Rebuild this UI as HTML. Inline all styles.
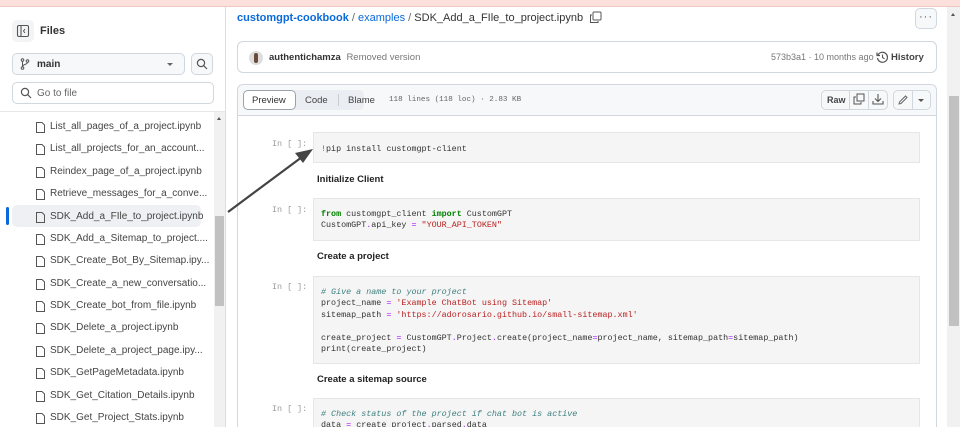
<!DOCTYPE html>
<html style="overflow:hidden;height:427px"><head><meta charset="utf-8"><style>
*{box-sizing:border-box;margin:0;padding:0}
body{width:960px;height:427px;overflow:hidden;background:#fff;font-family:"Liberation Sans",sans-serif;color:#1f2328;position:relative;font-size:10px}
.a{position:absolute}
.mono{font-family:"Liberation Mono",monospace}
.btn{border:1px solid #d0d7de;border-radius:5px;background:#f6f8fa}
.item{position:absolute;left:35px;font-size:10px;color:#444;white-space:nowrap}
.item svg{position:absolute;left:0;top:0}
.item span{position:absolute;left:15px;top:0}
.cell{position:absolute;left:313px;width:607px;background:#f5f5f5;border:1px solid #e6e6e6;font-family:"Liberation Mono",monospace;font-size:8.4px;line-height:11.4px;padding:10px 7px 8px;color:#333;white-space:pre}
.in{position:absolute;left:272px;font-family:"Liberation Mono",monospace;font-size:8.4px;color:#999}
.h{position:absolute;left:317px;font-weight:bold;font-size:9.5px;color:#222}
.k{color:#008000;font-weight:bold}.s{color:#ba2121}.c{color:#408080;font-style:italic}.o{color:#aa22ff}
</style></head><body>
<div class="a" style="left:0;top:0;width:960px;height:7px;background:#fbe0dc;border-bottom:1px solid #f0c8c2"></div>
<div class="a" style="left:225px;top:7px;width:1px;height:420px;background:#d8dee4"></div>
<div class="a" style="left:12px;top:20px;width:22px;height:22px;background:#f3f4f6;border-radius:5px"></div>
<svg class="a" style="left:16px;top:24px" width="14" height="14" viewBox="0 0 14 14"><rect x="1.5" y="1.5" width="11" height="11" rx="1.5" fill="none" stroke="#555" stroke-width="1.1"/><line x1="5" y1="1.5" x2="5" y2="12.5" stroke="#555" stroke-width="1.1"/><path d="M9 5 L7.5 7 L9 9" fill="none" stroke="#555" stroke-width="1"/></svg>
<div class="a" style="left:40px;top:25px;font-size:11px;font-weight:bold;color:#333">Files</div>
<div class="a btn" style="left:12px;top:53px;width:173px;height:22px"></div>
<svg class="a" style="left:20px;top:58px" width="10" height="12" viewBox="0 0 10 12"><circle cx="2.5" cy="2" r="1.3" fill="none" stroke="#555"/><circle cx="2.5" cy="10" r="1.3" fill="none" stroke="#555"/><circle cx="7.5" cy="3" r="1.3" fill="none" stroke="#555"/><path d="M2.5 3.3V8.7M7.5 4.3C7.5 7 2.5 6 2.5 8.7" fill="none" stroke="#555"/></svg>
<div class="a" style="left:37px;top:59px;font-size:10px;font-weight:bold;color:#333">main</div>
<div class="a" style="left:167px;top:63px;width:0;height:0;border-left:3px solid transparent;border-right:3px solid transparent;border-top:3px solid #666"></div>
<div class="a btn" style="left:191px;top:53px;width:22px;height:22px"></div>
<svg class="a" style="left:196px;top:58px" width="12" height="12"><circle cx="5" cy="5" r="3.6" fill="none" stroke="#555" stroke-width="1.2"/><line x1="7.7" y1="7.7" x2="11" y2="11" stroke="#555" stroke-width="1.2"/></svg>
<div class="a" style="left:12px;top:82px;width:202px;height:22px;border:1px solid #d0d7de;border-radius:5px"></div>
<svg class="a" style="left:20px;top:87px" width="12" height="12"><circle cx="5" cy="5" r="3.6" fill="none" stroke="#555" stroke-width="1.2"/><line x1="7.7" y1="7.7" x2="11" y2="11" stroke="#555" stroke-width="1.2"/></svg>
<div class="a" style="left:37px;top:88px;font-size:10px;color:#666">Go to file</div>
<div class="a" style="left:0;top:111px;width:225px;height:1px;background:#e5e7ea"></div>
<div class="a" style="left:214px;top:112px;width:11px;height:315px;background:#f1f1f1"></div>
<div class="a" style="left:217px;top:117px;width:0;height:0;border-left:2.5px solid transparent;border-right:2.5px solid transparent;border-bottom:3px solid #555"></div>
<div class="a" style="left:215px;top:216px;width:9px;height:90px;background:#c1c1c1"></div>
<div class="a" style="left:12px;top:205px;width:189px;height:22px;background:#eef0f3;border-radius:5px"></div>
<div class="a" style="left:6px;top:207px;width:3px;height:18px;background:#0969da;border-radius:2px"></div>
<div class="a" style="left:237px;top:12px;font-size:11px;white-space:nowrap"><span style="color:#0969da;font-weight:bold">customgpt-cookbook</span> <span style="color:#666">/</span> <span style="color:#0969da">examples</span> <span style="color:#666">/</span> <span style="color:#333">SDK_Add_a_FIle_to_project.ipynb</span></div>
<svg class="a" style="left:589px;top:11px" width="13" height="13"><rect x="4" y="1" width="8" height="8" rx="1" fill="none" stroke="#555"/><path d="M3 4H1.5V11.5H9V10" fill="none" stroke="#555"/></svg>
<div class="a btn" style="left:915px;top:8px;width:22px;height:21px"></div>
<div class="a" style="left:919px;top:11px;font-size:11px;color:#555;letter-spacing:1px">···</div>
<div class="a" style="left:237px;top:41px;width:700px;height:32px;border:1px solid #d0d7de;border-radius:6px"></div>
<div class="a" style="left:249px;top:51px;width:14px;height:14px;border-radius:50%;background:#ddd"></div>
<div class="a" style="left:254px;top:53px;width:4px;height:10px;border-radius:2px;background:#6b4a3a"></div>
<div class="a" style="left:269px;top:52px;font-size:9.5px;font-weight:bold;color:#333">authentichamza <span style="font-weight:normal;color:#777;margin-left:3px">Removed version</span></div>
<div class="a" style="left:771px;top:52px;font-size:9px;color:#777">573b3a1 · 10 months ago</div>
<svg class="a" style="left:876px;top:51px" width="12" height="12"><path d="M2 4A5 5 0 1 1 1.5 7" fill="none" stroke="#555" stroke-width="1.2"/><path d="M1 1.5V4.5H4" fill="none" stroke="#555" stroke-width="1.2"/><path d="M6.5 3.5V6.5L8.5 7.8" fill="none" stroke="#555" stroke-width="1.1"/></svg>
<div class="a" style="left:891px;top:52px;font-size:9.5px;font-weight:bold;color:#444">History</div>
<div class="a" style="left:237px;top:84px;width:700px;height:350px;border:1px solid #d0d7de;border-radius:6px"></div>
<div class="a" style="left:238px;top:85px;width:698px;height:31px;background:#f6f8fa;border-bottom:1px solid #d0d7de;border-radius:6px 6px 0 0"></div>
<div class="a" style="left:243px;top:90px;width:121px;height:20px;background:#eaedf1;border-radius:5px"></div>
<div class="a" style="left:243px;top:90px;width:53px;height:20px;background:#fff;border:1px solid #9aa3ab;border-radius:5px"></div>
<div class="a" style="left:252px;top:95px;font-size:9.5px;color:#333">Preview</div>
<div class="a" style="left:305px;top:95px;font-size:9.5px;color:#444">Code</div>
<div class="a" style="left:338px;top:94px;width:1px;height:12px;background:#ccc"></div>
<div class="a" style="left:348px;top:95px;font-size:9.5px;color:#444">Blame</div>
<div class="a mono" style="left:389px;top:96px;font-size:7.6px;color:#666">118 lines (118 loc) · 2.83 KB</div>
<div class="a btn" style="left:821px;top:90px;width:67px;height:20px;background:#f6f8fa"></div>
<div class="a" style="left:849px;top:90px;width:1px;height:20px;background:#d0d7de"></div>
<div class="a" style="left:868px;top:90px;width:1px;height:20px;background:#d0d7de"></div>
<div class="a" style="left:827px;top:95px;font-size:9px;font-weight:bold;color:#444">Raw</div>
<svg class="a" style="left:853px;top:93px" width="12" height="12"><rect x="4" y="1" width="7" height="7" fill="none" stroke="#555"/><path d="M3 4H1V11H8V9" fill="none" stroke="#555"/></svg>
<svg class="a" style="left:872px;top:93px" width="12" height="12"><path d="M6 1V8M3 5.5L6 8.5L9 5.5M1 8V11H11V8" fill="none" stroke="#555" stroke-width="1.1"/></svg>
<div class="a btn" style="left:893px;top:90px;width:38px;height:20px;background:#f6f8fa"></div>
<div class="a" style="left:912px;top:90px;width:1px;height:20px;background:#d0d7de"></div>
<svg class="a" style="left:897px;top:94px" width="12" height="12"><path d="M2 10L2.5 8L8.5 2L10 3.5L4 9.5Z" fill="none" stroke="#666"/></svg>
<div class="a" style="left:918px;top:99px;width:0;height:0;border-left:3px solid transparent;border-right:3px solid transparent;border-top:3px solid #555"></div>
<div class="in" style="top:139px">In [ ]:</div>
<div class="cell" style="top:132px;height:31px;padding-top:11px"><span class="o">!</span>pip install customgpt-client</div>
<div class="h" style="top:174px">Initialize Client</div>
<div class="in" style="top:205px">In [ ]:</div>
<div class="cell" style="top:198px;height:43px"><span class="k">from</span> customgpt_client <span class="k">import</span> CustomGPT
CustomGPT<span class="o">.</span>api_key <span class="o">=</span> <span class="s">"YOUR_API_TOKEN"</span></div>
<div class="h" style="top:251px">Create a project</div>
<div class="in" style="top:282px">In [ ]:</div>
<div class="cell" style="top:276px;height:88px"><span class="c"># Give a name to your project</span>
project_name <span class="o">=</span> <span class="s">'Example ChatBot using Sitemap'</span>
sitemap_path <span class="o">=</span> <span class="s">'https://adorosario.github.io/small-sitemap.xml'</span>

create_project <span class="o">=</span> CustomGPT<span class="o">.</span>Project<span class="o">.</span>create(project_name<span class="o">=</span>project_name, sitemap_path<span class="o">=</span>sitemap_path)
print(create_project)</div>
<div class="h" style="top:374px">Create a sitemap source</div>
<div class="in" style="top:404px">In [ ]:</div>
<div class="cell" style="top:398px;height:40px"><span class="c"># Check status of the project if chat bot is active</span>
data <span class="o">=</span> create_project<span class="o">.</span>parsed<span class="o">.</span>data</div>
<div class="a" style="left:947px;top:7px;width:13px;height:420px;background:#f1f1f1"></div>
<div class="a" style="left:951px;top:13px;width:0;height:0;border-left:2.5px solid transparent;border-right:2.5px solid transparent;border-bottom:3px solid #555"></div>
<div class="a" style="left:949px;top:96px;width:10px;height:230px;background:#c1c1c1"></div>
<svg class="a" style="left:0;top:0" width="960" height="427"><line x1="228" y1="212" x2="302" y2="157" stroke="#444" stroke-width="2.2"/><path d="M313 149L295 153L303 163Z" fill="#444"/></svg>
<div class="item" style="top:121px"><svg width="11" height="13"><path d="M1.5 1.5H7L9.5 4V11.5H1.5Z" fill="none" stroke="#555"/></svg><span>List_all_pages_of_a_project.ipynb</span></div>
<div class="item" style="top:143px"><svg width="11" height="13"><path d="M1.5 1.5H7L9.5 4V11.5H1.5Z" fill="none" stroke="#555"/></svg><span>List_all_projects_for_an_account...</span></div>
<div class="item" style="top:166px"><svg width="11" height="13"><path d="M1.5 1.5H7L9.5 4V11.5H1.5Z" fill="none" stroke="#555"/></svg><span>Reindex_page_of_a_project.ipynb</span></div>
<div class="item" style="top:188px"><svg width="11" height="13"><path d="M1.5 1.5H7L9.5 4V11.5H1.5Z" fill="none" stroke="#555"/></svg><span>Retrieve_messages_for_a_conve...</span></div>
<div class="item" style="top:211px"><svg width="11" height="13"><path d="M1.5 1.5H7L9.5 4V11.5H1.5Z" fill="none" stroke="#555"/></svg><span>SDK_Add_a_FIle_to_project.ipynb</span></div>
<div class="item" style="top:233px"><svg width="11" height="13"><path d="M1.5 1.5H7L9.5 4V11.5H1.5Z" fill="none" stroke="#555"/></svg><span>SDK_Add_a_Sitemap_to_project....</span></div>
<div class="item" style="top:255px"><svg width="11" height="13"><path d="M1.5 1.5H7L9.5 4V11.5H1.5Z" fill="none" stroke="#555"/></svg><span>SDK_Create_Bot_By_Sitemap.ipy...</span></div>
<div class="item" style="top:278px"><svg width="11" height="13"><path d="M1.5 1.5H7L9.5 4V11.5H1.5Z" fill="none" stroke="#555"/></svg><span>SDK_Create_a_new_conversatio...</span></div>
<div class="item" style="top:300px"><svg width="11" height="13"><path d="M1.5 1.5H7L9.5 4V11.5H1.5Z" fill="none" stroke="#555"/></svg><span>SDK_Create_bot_from_file.ipynb</span></div>
<div class="item" style="top:322px"><svg width="11" height="13"><path d="M1.5 1.5H7L9.5 4V11.5H1.5Z" fill="none" stroke="#555"/></svg><span>SDK_Delete_a_project.ipynb</span></div>
<div class="item" style="top:345px"><svg width="11" height="13"><path d="M1.5 1.5H7L9.5 4V11.5H1.5Z" fill="none" stroke="#555"/></svg><span>SDK_Delete_a_project_page.ipy...</span></div>
<div class="item" style="top:367px"><svg width="11" height="13"><path d="M1.5 1.5H7L9.5 4V11.5H1.5Z" fill="none" stroke="#555"/></svg><span>SDK_GetPageMetadata.ipynb</span></div>
<div class="item" style="top:390px"><svg width="11" height="13"><path d="M1.5 1.5H7L9.5 4V11.5H1.5Z" fill="none" stroke="#555"/></svg><span>SDK_Get_Citation_Details.ipynb</span></div>
<div class="item" style="top:412px"><svg width="11" height="13"><path d="M1.5 1.5H7L9.5 4V11.5H1.5Z" fill="none" stroke="#555"/></svg><span>SDK_Get_Project_Stats.ipynb</span></div>
</body></html>
